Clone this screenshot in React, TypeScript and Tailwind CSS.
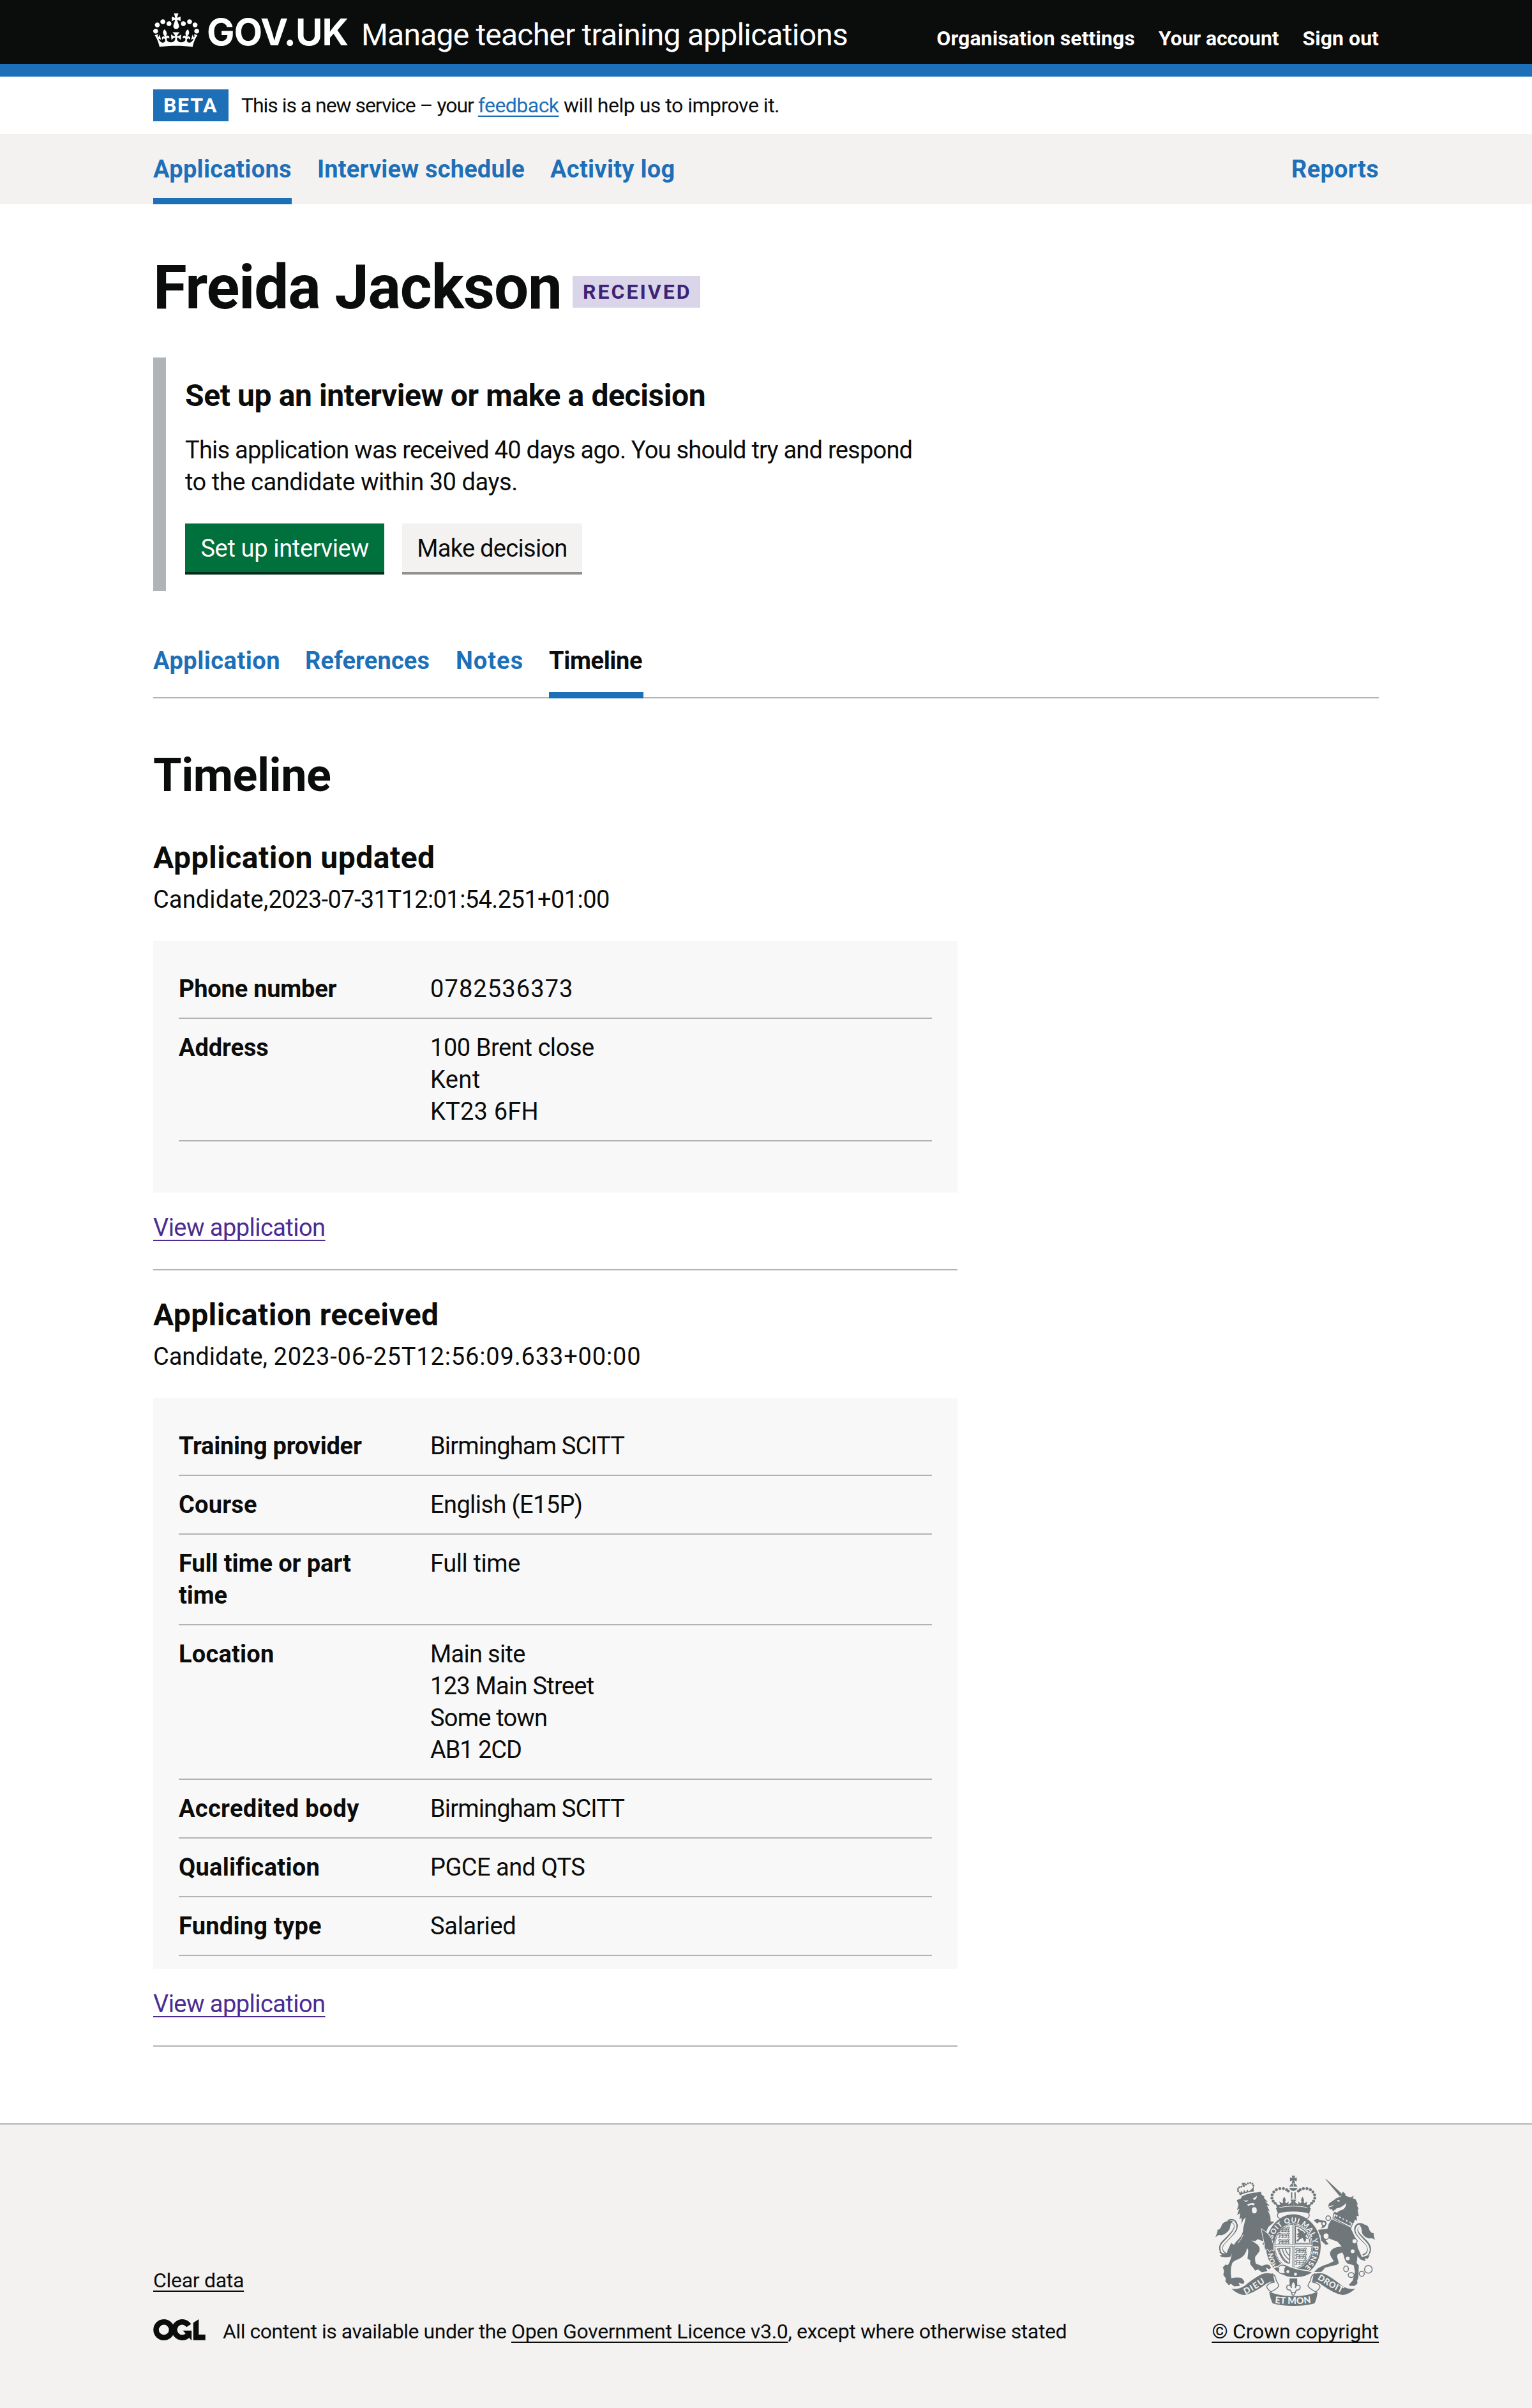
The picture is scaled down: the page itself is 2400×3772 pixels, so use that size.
import React from "react";

const INK = "#6f777b";
const PAPER = "#f3f2f1";

function HalfCrown() {
  return (
    <g>
      {[[474,396],[466,389],[451,384],[434,384],[418,389],[406,400],[398,414],[397,429],[403,443],[412,453]].map(([x, y]) => (
        <circle key={`${x}-${y}`} cx={x} cy={y} r="7" />
      ))}
      <path d="M413 454 Q428 464 436 460 L432 444 L446 454 L450 446 Q444 438 455 422 Q466 438 459 446 L464 454 L476 444 L474 458 Q486 454 490 446 L484 436 H498 V482 H424 Z" />
    </g>
  );
}

function Lions({ x, y }: { x: number; y: number }) {
  return (
    <g fill="none" stroke={INK} strokeWidth="4" strokeLinecap="round">
      {[0, 28, 56].map((d) => (
        <path key={d} d={`M${x} ${y + d} q6 -9 12 -2 h28 q7 -10 12 0 M${x + 6} ${y + d + 2} v12 h-6 M${x + 18} ${y + d + 2} l4 12 h-7 M${x + 36} ${y + d + 2} v12 h-7 M${x + 46} ${y + d} l4 14 h-7 M${x + 10} ${y + d + 6} h34`} />
      ))}
    </g>
  );
}

function RoyalArms({ className }: { className?: string }) {
  return (
    <svg viewBox="131 323 751 613" className={className} fill={INK} aria-hidden="true">
      {/* lion tail */}
      <path d="M192 698 C150 690 150 655 172 635 C205 600 238 575 224 547 C218 535 205 533 192 540" fill="none" stroke={INK} strokeWidth="18" />
      <path d="M191 700 C152 690 152 655 174 636 C206 602 236 575 222 548 C216 537 205 536 192 543" fill="none" stroke={PAPER} strokeWidth="9" />
      <path d="M214 536 C190 535 168 538 160 558 C155 574 144 580 140 577 C143 586 138 594 131 614 C140 603 150 600 160 604 C180 598 198 584 201 562 C203 548 208 542 214 536Z" />
      <path d="M205 640 C195 662 184 682 184 692 C170 690 157 684 148 682 C155 690 160 693 163 695 C158 698 155 698 150 700 C170 712 190 708 202 704 C210 690 215 670 220 650Z" />
      {/* lion crown */}
      <path d="M246 416 L240 398 L249 404 L252 394 L261 406 L266 390 L274 402 L283 388 L287 398 L300 388 L311 374 L311 398 Q278 400 246 416Z" />
      {[[238,396],[237,386],[243,378],[253,375],[275,365],[284,359],[295,357],[305,361],[310,370],[263,371]].map(([x, y]) => (
        <circle key={`${x}-${y}`} cx={x} cy={y} r="4.6" />
      ))}
      <path d="M262 353 l4 5 6-3 v10 l-5-1 3 12 h-8 l-1-11 -5 2 -1-10 6 2z" />
      {/* lion body */}
      <path d="M231 438 L250 432 L256 420 Q290 404 330 402 L346 399 L348 412 L364 424 L358 427 L377 446 L366 445 L386 464 L373 463 L387 492 L376 487 Q394 512 390 538 L409 540 L380 565 L370 588 Q388 602 402 626 Q405 650 405 676 L394 670 L386 682 L378 668 L365 672 L358 655 L372 652 L352 646 L360 634 L330 622 L318 632 L300 628 L318 640 Q345 655 338 680 L318 705 Q316 725 322 738 L350 748 Q372 738 384 744 L393 756 L386 764 L368 756 L376 772 L350 778 L332 765 L318 770 L305 752 Q290 740 296 722 L282 714 L284 695 Q288 670 280 664 Q275 700 240 716 Q210 726 208 742 Q200 765 206 806 Q236 798 256 806 L268 822 L262 834 L240 826 L246 842 L220 844 L204 832 L194 838 L178 822 L180 806 L168 790 L172 772 L166 755 L178 742 L190 744 Q204 722 208 690 Q208 650 240 622 Q262 600 262 570 Q268 545 274 520 L262 530 L254 552 L254 522 L244 528 L248 500 L233 508 L244 478 L232 486 L240 460 Z" />
      <g fill={PAPER}>
        <path d="M260 437 q14 8 26 0 q-4 12 -16 8z M306 432 q10 -4 20 -14 q0 18 -12 19z M280 460 q16 -12 36 -6 l-4 10 q-12 -8 -26 2z" />
        <path d="M304 476 q10 -10 20 0 q6 24 -10 25 q-16 -2 -10 -25z" />
      </g>
      <path d="M238 640 Q255 620 262 600" fill="none" stroke={PAPER} strokeWidth="3" />
      {/* unicorn tail */}
      <path d="M826 702 C862 690 862 660 838 636 C805 604 785 585 796 565 C802 553 816 552 826 560" fill="none" stroke={INK} strokeWidth="18" />
      <path d="M826 704 C860 692 860 661 836 637 C803 605 787 585 798 567 C804 556 816 556 826 563" fill="none" stroke={PAPER} strokeWidth="9" />
      <path d="M808 553 C835 550 852 556 854 574 C860 590 870 596 876 593 C875 603 878 612 882 626 C872 614 862 620 850 618 C830 610 820 600 820 580 C818 566 814 560 808 553Z" />
      <path d="M788 640 Q808 672 820 706 L858 698 L848 714 L834 712 L838 726 L815 718 Q795 700 786 670Z" />
      {/* unicorn horn, head and mane */}
      <path d="M648 339 L655 342 L728 410 L718 422Z" />
      <path d="M730 398 L742 408 L744 418 L766 426 L782 418 L778 430 L792 436 L802 460 L796 458 L806 484 L800 482 L806 514 L796 512 L797 536 L788 530 L782 546 L690 500 L694 482 L684 492 L680 480 L670 482 L662 466 L666 454 L692 436 Q702 426 722 422Z" />
      <path d="M690 492 L700 478 Q726 474 746 452 Q748 478 722 486 Q708 490 704 498Z M702 440 l12 -3 2 8 q-10 2 -14 -5z M664 468 l22 -6 0 4 -18 6z" fill={PAPER} />
      {/* unicorn body */}
      <path d="M678 528 L768 570 Q780 596 792 620 Q806 660 800 700 L796 735 L806 745 L804 802 L798 818 L800 830 L786 842 L768 842 L758 838 L778 816 L782 800 L788 775 L782 745 L752 736 Q738 722 736 700 L728 684 L712 690 Q700 695 706 712 L712 735 L704 742 Q665 752 648 756 L630 776 L596 777 L612 760 L634 748 Q660 742 688 726 L676 706 Q662 684 684 668 Q700 656 726 657 L706 634 L668 620 L656 592 L650 628 L664 645 L650 648 L628 628 L626 604 L615 590 L616 578 L658 574 L664 552Z" />
      <path d="M594 534 Q610 520 622 532 L650 536 L655 548 L646 566 L628 572 Q640 556 632 544 L618 542 L610 548Z" />
      <path d="M688 500 L778 545 L768 570 L684 524Z" fill={PAPER} stroke={INK} strokeWidth="4" />
      <path d="M690 522 l4 -14 8 10 8 -10 6 16 10 -8 6 16 10 -8 6 16 12 -6 4 14 8 -8 -6 20z" />
      {/* chain and spots */}
      <g fill={PAPER} stroke={INK} strokeWidth="4.5">
        <circle cx="662" cy="523" r="11" />
        <circle cx="641" cy="549" r="9" />
        <ellipse cx="652" cy="608" rx="14" ry="15" />
        <circle cx="786" cy="632" r="12" />
        <ellipse cx="746" cy="762" rx="11" ry="14" />
        <ellipse cx="770" cy="791" rx="14" ry="11" />
        <circle cx="820" cy="785" r="12" />
        <circle cx="851" cy="764" r="18" />
      </g>
      <g fill={PAPER}><circle cx="777" cy="679" r="9" /><circle cx="754" cy="713" r="9" /></g>
      {/* royal crown */}
      <HalfCrown />
      <g transform="translate(996 0) scale(-1 1)"><HalfCrown /></g>
      <path d="M490 323 h17 l-5 13 12 -5 v19 l-12 -5 4 13 h-16 l4 -13 -12 5 v-19 l12 5z" />
      <path d="M478 375 q20 -34 40 0z M478 381 h40 q-6 14 -20 14 t-20 -14z" />
      <path d="M498 358 v16" stroke={PAPER} strokeWidth="3" />
      <path d="M490 402 v30 M506 402 v30" stroke={INK} strokeWidth="6" />
      <path d="M416 476 Q498 458 580 476 L573 500 H425Z" />
      <path d="M432 473 Q498 460 564 473" fill="none" stroke={PAPER} strokeWidth="3" />
      {/* garter and shield */}
      <ellipse cx="498" cy="655" rx="133" ry="152" fill={PAPER} />
      <ellipse cx="498" cy="655" rx="129" ry="148" />
      <path d="M433 496 Q498 484 563 496 Q578 503 570 520 L560 526 Q498 488 436 526 L426 520 Q418 503 433 496Z" fill={PAPER} stroke={INK} strokeWidth="4" />
      <ellipse cx="498" cy="655" rx="91" ry="107" fill={PAPER} />
      <ellipse cx="498" cy="655" rx="87" ry="103" fill="none" stroke={INK} strokeWidth="3" />
      <path d="M498 550 V758 M409 652 H587" stroke={INK} strokeWidth="9" />
      <path d="M498 550 V758 M409 652 H587" stroke={PAPER} strokeWidth="3" />
      <Lions x={428} y={572} />
      <Lions x={508} y={670} />
      <path d="M508 560 Q566 572 577 642 H508Z" fill="none" stroke={INK} strokeWidth="4" />
      <path d="M516 575 q10 -8 14 6 q14 0 20 14 l10 -8 q4 14 -6 20 l14 14 -12 -2 q4 12 -6 16 l-8 -18 -12 4 -12 14 -6 -6 14 -14 -12 -4 8 -6 -10 -6 12 -6z" />
      <path d="M422 668 Q450 664 482 664 L480 734 Q452 742 424 668Z M432 670 Q440 710 474 734 M446 668 Q452 700 478 718 M460 666 Q464 686 480 700" fill="none" stroke={INK} strokeWidth="4.5" />
      <defs>
        <path id="garter-main" d="M401 622 A98 116 0 1 1 556 750" />
        <path id="garter-left" d="M424 754 A98 116 0 0 1 402 680" />
      </defs>
      <g fill={PAPER} fontFamily="Lato, sans-serif" fontWeight="900">
        <text fontSize="34"><textPath href="#garter-main" textLength="402">SOIT QUI MAL Y PENSE</textPath></text>
        <text fontSize="32"><textPath href="#garter-left" textLength="72">HON</textPath></text>
      </g>
      {/* lion foreleg over the garter */}
      <path d="M346 572 Q380 592 397 622 Q408 650 405 678 L394 672 L386 684 L378 670 L366 674 L360 640Z" stroke={PAPER} strokeWidth="3" />
      {/* belt */}
      <path d="M424 752 Q440 735 462 742 Q505 765 565 770 L590 778 Q545 812 470 800 L424 782 Q445 768 424 752Z" stroke={PAPER} strokeWidth="5" />
      <path d="M444 744 Q424 748 430 764 Q422 778 440 784 L462 784 Q450 768 464 750Z" fill={PAPER} stroke={INK} strokeWidth="4" />
      <g fill={PAPER}><circle cx="472" cy="775" r="7" /><circle cx="508" cy="787" r="7" /></g>
      {/* fleur-de-lis pendant */}
      <path d="M480 807 h36 v40 h-36z" />
      <path d="M498 820 Q482 836 490 852 Q482 832 468 842 Q462 862 484 862 L492 880 h12 L512 862 Q534 862 529 842 Q514 832 506 852 Q514 836 498 820Z" fill={PAPER} stroke={INK} strokeWidth="4.5" />
      <circle cx="498" cy="879" r="7" fill={PAPER} stroke={INK} strokeWidth="4" />
      {/* motto ribbon */}
      <path d="M206 855 Q235 862 268 842 Q320 800 352 786 Q385 776 412 792 L408 822 Q385 820 362 838 Q310 876 268 885 Q240 886 206 855Z" />
      <path d="M790 855 Q761 862 728 842 Q676 800 644 786 Q611 776 584 792 L588 822 Q611 820 634 838 Q686 876 728 885 Q756 886 790 855Z" />
      <path d="M400 786 Q418 800 416 814 Q426 830 430 842 Q420 858 392 870 Q376 858 372 846 Q378 828 408 824Z M596 786 Q578 800 580 814 Q570 830 566 842 Q576 858 604 870 Q620 858 624 846 Q618 828 588 824Z" fill={PAPER} stroke={INK} strokeWidth="4" />
      <path d="M384 870 Q440 892 498 890 Q556 892 612 870 Q608 905 598 924 Q560 936 498 936 Q436 936 400 924 Q390 905 384 870Z" />
      <defs>
        <path id="motto-left" d="M272 882 Q320 860 376 818" />
        <path id="motto-mid" d="M410 922 Q498 934 588 920" />
        <path id="motto-right" d="M610 810 Q670 850 738 880" />
      </defs>
      <g fill={PAPER} fontFamily="Lato, sans-serif" fontWeight="900">
        <text fontSize="40"><textPath href="#motto-left" textLength="110">DIEU</textPath></text>
        <text fontSize="43"><textPath href="#motto-mid" textLength="172">ET MON</textPath></text>
        <text fontSize="40"><textPath href="#motto-right" textLength="132">DROIT</textPath></text>
      </g>
    </svg>
  );
}

function CrownLogo({ className }: { className?: string }) {
  return (
    <svg viewBox="0 0 132 97" className={className} fill="currentColor" aria-hidden="true">
      <path fillRule="evenodd" d="M25 30.2c3.5 1.5 7.7-.2 9.1-3.7 1.5-3.6-.2-7.8-3.9-9.2-3.6-1.4-7.6.3-9.1 3.9-1.4 3.5.3 7.5 3.9 9zM9 39.5c3.6 1.5 7.8-.2 9.2-3.7 1.5-3.6-.2-7.8-3.9-9.1-3.6-1.5-7.6.2-9.1 3.8-1.4 3.5.3 7.5 3.8 9zM4.4 57.2c3.5 1.5 7.7-.2 9.1-3.8 1.5-3.6-.2-7.7-3.9-9.1-3.5-1.5-7.6.3-9.1 3.8-1.4 3.5.3 7.6 3.9 9.1zm38.3-21.4c3.5 1.5 7.7-.2 9.1-3.8 1.5-3.6-.2-7.7-3.9-9.1-3.6-1.5-7.6.3-9.1 3.8-1.3 3.6.4 7.7 3.9 9.1zm64.4-5.6c-3.6 1.5-7.8-.2-9.1-3.7-1.5-3.6.2-7.8 3.8-9.2 3.6-1.4 7.7.3 9.2 3.9 1.3 3.5-.4 7.5-3.9 9zm15.9 9.3c-3.6 1.5-7.7-.2-9.1-3.7-1.5-3.6.2-7.8 3.7-9.1 3.6-1.5 7.7.2 9.2 3.8 1.5 3.5-.3 7.5-3.8 9zm4.7 17.7c-3.6 1.5-7.8-.2-9.2-3.8-1.5-3.6.2-7.7 3.9-9.1 3.6-1.5 7.7.3 9.2 3.8 1.3 3.5-.4 7.6-3.9 9.1zM89.3 35.8c-3.6 1.5-7.8-.2-9.2-3.8-1.4-3.6.2-7.7 3.9-9.1 3.6-1.5 7.7.3 9.2 3.8 1.4 3.6-.3 7.7-3.9 9.1zM69.7 17.7l8.9 4.7V9.3l-8.9 2.8c-.2-.3-.5-.6-.9-.9L72.4 0H59.6l3.5 11.2c-.3.3-.6.5-.9.9l-8.8-2.8v13.1l8.8-4.7c.3.3.6.7.9.9l-5 15.4v.1c-.2.8-.4 1.6-.4 2.4 0 4.1 3.1 7.5 7 8.1h.2c.3 0 .7.1 1 .1.4 0 .7 0 1-.1h.2c4-.6 7.1-4.1 7.1-8.1 0-.8-.1-1.7-.4-2.4V34l-5.1-15.4c.4-.2.7-.6 1-.9zM66 92.8c16.9 0 32.8 1.1 47.1 3.2 4-16.9 8.9-26.7 14-33.5l-9.6-3.4c1 4.9 1.1 7.2 0 10.2-1.5-1.4-3-4.3-4.2-8.7L108.6 76c2.8-2 5-3.2 7.5-3.3-4.4 9.4-10 11.9-13.6 11.2-4.3-.8-6.3-4.6-5.6-7.9 1-4.7 5.7-5.9 8-.5 4.3-8.7-3-11.4-7.6-8.8 7.1-7.2 7.9-13.5 2.1-21.1-8 6.1-8.1 12.3-4.5 20.8-4.7-5.4-12.1-2.5-9.5 6.2 3.4-5.2 7.9-2 7.2 3.1-.6 4.3-6.4 7.8-13.5 7.2-10.3-.9-10.9-8-11.2-13.8 2.5-.5 7.1 1.8 11 7.3L80.2 60c-4.1 4.4-8 5.3-12.3 5.4 1.4-4.4 8-11.6 8-11.6H55.5s6.4 7.2 7.9 11.6c-4.2-.1-8-1-12.3-5.4l1.4 16.4c3.9-5.5 8.5-7.7 10.9-7.3-.3 5.8-.9 12.8-11.1 13.8-7.2.6-12.9-2.9-13.5-7.2-.7-5 3.8-8.3 7.1-3.1 2.7-8.7-4.6-11.6-9.4-6.2 3.7-8.5 3.6-14.7-4.6-20.8-5.8 7.6-5 13.9 2.2 21.1-4.7-2.6-11.9.1-7.7 8.8 2.3-5.5 7.1-4.2 8.1.5.7 3.3-1.3 7.1-5.7 7.9-3.5.7-9-1.8-13.5-11.2 2.5.1 4.7 1.3 7.5 3.3l-4.7-15.4c-1.2 4.4-2.7 7.2-4.3 8.7-1.1-3-.9-5.3 0-10.2l-9.5 3.4c5 6.9 9.9 16.7 14 33.5 14.8-2.1 30.8-3.2 47.7-3.2z" />
    </svg>
  );
}

function OglLogo({ className }: { className?: string }) {
  return (
    <svg viewBox="0 0 483.2 195.7" className={className} fill="none" stroke="currentColor" strokeWidth="50.7" role="img" aria-label="Open Government Licence">
      <circle cx="97.8" cy="97.8" r="72.4" />
      <path d="M329 58.5 A72.4 72.4 0 1 0 318 150" />
      <path d="M274.900 105.700h80v87.800h-3z" fill="currentColor" stroke="none" />
      <path d="M370.800 32.400 421.500 0v142.800h61.700v50.700H370.800z" fill="currentColor" stroke="none" />
    </svg>
  );
}

function Row({ label, labelClass, children }: { label: string; labelClass: string; children: React.ReactNode }) {
  return (
    <div className="flex border-b-2 border-[#b1b4b6] py-5">
      <dt className={`w-[394px] shrink-0 pr-[60px] font-bold ${labelClass}`}>{label}</dt>
      <dd className="flex flex-col">{children}</dd>
    </div>
  );
}

function EventHeader({ title, titleClass, children }: { title: string; titleClass: string; children: React.ReactNode }) {
  return (
    <>
      <h3 className={`text-[48px] leading-[60px] font-bold ${titleClass}`}>{title}</h3>
      <p className="mt-2.5 mb-10 whitespace-pre">{children}</p>
    </>
  );
}

function ViewLink() {
  return (
    <p className="mt-[30px] border-b-2 border-[#b1b4b6] pb-10">
      <a className="tracking-[-0.55px] text-[#4c2c92] underline decoration-2 underline-offset-[6px] [text-decoration-skip-ink:none]">View application</a>
    </p>
  );
}

export default function App() {
  return (
    <div className="w-[2400px] bg-white font-[Roboto,sans-serif] text-[38px] leading-[50px] text-[#0b0c0c]">
      <header className="h-[120px] border-b-[20px] border-[#1d70b8] bg-[#0b0c0c] text-white">
        <div className="mx-auto flex w-[1920px] items-start">
          <CrownLogo className="mt-[21px] h-[53px] w-[72px]" />
          <span className="mt-5 ml-3 w-[242px] font-[Inter] text-[58px] leading-[60px] font-bold tracking-[-1px]">GOV.UK</span>
          <span className="mt-[25px] text-[48px] leading-[60px] tracking-[-0.79px]">Manage teacher training applications</span>
          <nav className="mt-10 ml-auto flex gap-[37px] text-[32px] leading-10 font-bold">
            <a className="tracking-[0.1px]">Organisation settings</a>
            <a className="tracking-[-0.1px]">Your account</a>
            <a className="tracking-[0.04px]">Sign out</a>
          </nav>
        </div>
      </header>

      <div className="mx-auto flex h-[90px] w-[1920px] items-center text-[32px]">
        <strong className="w-[118px] bg-[#1d70b8] pl-4 tracking-[1.7px] text-white">BETA</strong>
        <p className="ml-5 whitespace-pre">
          <span className="tracking-[-1.05px]">This is a new service – your </span>
          <a className="tracking-[-0.54px] text-[#1d70b8] underline decoration-2 underline-offset-[5px] [text-decoration-skip-ink:none]">feedback</a>
          <span className="tracking-[-0.49px]"> will help us to improve it.</span>
        </p>
      </div>

      <div className="bg-[#f3f2f1]">
        <nav className="mx-auto flex h-[110px] w-[1920px] gap-10 font-bold text-[#1d70b8]">
          <a className="w-[217px] border-b-[10px] border-[#1d70b8] pt-[30px] tracking-[0.31px] whitespace-nowrap">Applications</a>
          <a className="w-[325px] pt-[30px] tracking-[0.18px] whitespace-nowrap">Interview schedule</a>
          <a className="pt-[30px] tracking-[0.28px]">Activity log</a>
          <a className="ml-auto pt-[30px] tracking-[0.3px]">Reports</a>
        </nav>
      </div>

      <main className="mx-auto w-[1920px] pt-20">
        <div className="flex h-[100px] items-start">
          <h1 className="w-[657px] text-[96px] leading-[100px] font-bold tracking-[-1.16px] whitespace-nowrap">Freida Jackson</h1>
          <strong className="mt-8 w-[200px] bg-[#dbd5e9] pl-4 text-[32px] tracking-[3px] text-[#3d2375]">RECEIVED</strong>
        </div>

        <section className="mt-[60px] h-[366px] border-l-[20px] border-[#b1b4b6] pt-[30px] pl-[30px]">
          <h2 className="text-[48px] leading-[60px] font-bold tracking-[-0.4px]">Set up an interview or make a decision</h2>
          <p className="mt-[30px]">
            <span className="tracking-[-0.76px]">This application was received 40 days ago. You should try and respond</span>
            <br />
            <span className="tracking-[-0.44px]">to the candidate within 30 days.</span>
          </p>
          <div className="mt-10 flex gap-7">
            <button className="h-20 w-[312px] border-b-4 border-[#002d18] bg-[#00703c] pt-0.5 leading-[74px] tracking-[-0.34px] text-white">Set up interview</button>
            <button className="h-20 w-[282px] border-b-4 border-[#929191] bg-[#f3f2f1] pt-0.5 leading-[74px] tracking-[-0.71px]">Make decision</button>
          </div>
        </section>

        <nav className="mt-[84px] flex h-[84px] gap-[41px] border-b-2 border-[#b1b4b6] font-bold whitespace-nowrap text-[#1d70b8]">
          <a className="w-[197px] tracking-[0.5px]">Application</a>
          <a className="w-[195px] tracking-[0.14px]">References</a>
          <a className="w-[105px] tracking-[1px]">Notes</a>
          <a className="h-[84px] w-[148px] border-b-[10px] border-[#1d70b8] tracking-[-0.35px] text-[#0b0c0c]">Timeline</a>
        </nav>

        <h2 className="mt-[81px] text-[72px] leading-[80px] font-bold tracking-[-0.48px]">Timeline</h2>

        <div className="mt-[59px] w-[1260px]">
          <EventHeader title="Application updated" titleClass="tracking-[0.49px]">
            <span className="tracking-[0.12px]">Candidate,</span>
            <span className="tracking-[-0.59px]">2023-07-31T12:01:54.251+01:00</span>
          </EventHeader>
          <dl className="bg-[#f8f8f8] px-10 pt-[30px] pb-20">
            <Row label="Phone number" labelClass="tracking-[-0.22px]"><span className="tracking-[1.1px]">0782536373</span></Row>
            <Row label="Address" labelClass="tracking-[-0.1px]">
              <span className="tracking-[-0.43px]">100 Brent close</span>
              <span className="tracking-[0.4px]">Kent</span>
              <span className="tracking-[0.2px]">KT23 6FH</span>
            </Row>
          </dl>
          <ViewLink />
        </div>

        <div className="mt-10 w-[1260px]">
          <EventHeader title="Application received" titleClass="tracking-[0.36px]">
            <span className="tracking-[-0.02px]">Candidate, </span>
            <span className="tracking-[0.85px]">2023-06-25T12:56:09.633+00:00</span>
          </EventHeader>
          <dl className="bg-[#f8f8f8] px-10 pt-[30px] pb-5">
            <Row label="Training provider" labelClass="tracking-[-0.25px]"><span className="tracking-[-0.85px]">Birmingham SCITT</span></Row>
            <Row label="Course" labelClass="tracking-[0.19px]"><span className="tracking-[-0.6px]">English (E15P)</span></Row>
            <Row label="Full time or part time" labelClass="tracking-[-0.09px]"><span className="tracking-[-0.4px]">Full time</span></Row>
            <Row label="Location" labelClass="tracking-[0.21px]">
              <span className="tracking-[-0.7px]">Main site</span>
              <span className="tracking-[-0.72px]">123 Main Street</span>
              <span className="tracking-[-0.8px]">Some town</span>
              <span className="tracking-[-1.06px]">AB1 2CD</span>
            </Row>
            <Row label="Accredited body" labelClass="tracking-[0.3px]"><span className="tracking-[-0.85px]">Birmingham SCITT</span></Row>
            <Row label="Qualification" labelClass="tracking-[0.28px]"><span className="tracking-[-0.5px]">PGCE and QTS</span></Row>
            <Row label="Funding type" labelClass="tracking-[0.25px]"><span className="tracking-[-0.3px]">Salaried</span></Row>
          </dl>
          <ViewLink />
        </div>
      </main>

      <footer className="mt-[120px] h-[446px] border-t-2 border-[#b1b4b6] bg-[#f3f2f1] text-[32px] leading-10">
        <div className="mx-auto flex w-[1920px] justify-between pt-20">
          <div className="pt-36">
            <a className="tracking-[-0.3px] underline decoration-2 underline-offset-[5px] [text-decoration-skip-ink:none]">Clear data</a>
            <div className="mt-10 flex items-start">
              <OglLogo className="mt-px h-[33px] w-[82px]" />
              <p className="ml-[27px] whitespace-pre">
                <span className="tracking-[-0.47px]">All content is available under the </span>
                <a className="tracking-[-0.31px] underline decoration-2 underline-offset-[5px] [text-decoration-skip-ink:none]">Open Government Licence v3.0</a>
                <span className="tracking-[-0.38px]">, except where otherwise stated</span>
              </p>
            </div>
          </div>
          <div className="flex flex-col items-end">
            <RoyalArms className="mr-1.5 h-[204px] w-[250px]" />
            <a className="mt-5 tracking-[-0.2px] underline decoration-2 underline-offset-[5px] [text-decoration-skip-ink:none]">© Crown copyright</a>
          </div>
        </div>
      </footer>
    </div>
  );
}
